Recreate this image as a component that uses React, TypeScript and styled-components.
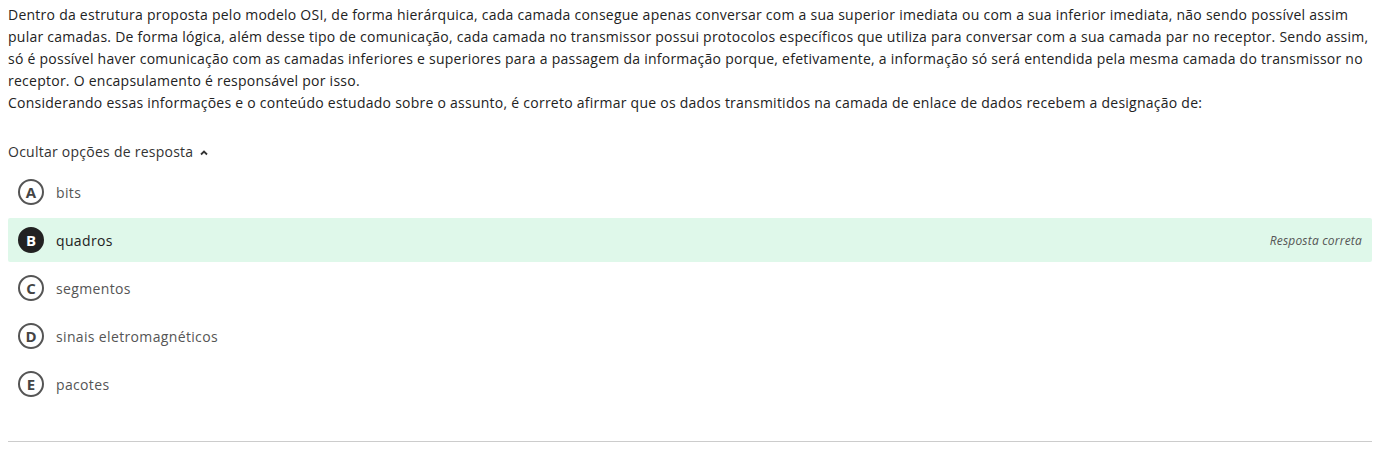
import React from "react";
import styled, { createGlobalStyle } from "styled-components";

const Global = createGlobalStyle`
  html, body { margin: 0; padding: 0; background: #fff; }
  body { font-family: "Open Sans", "Liberation Sans", sans-serif; color: #222; }
`;

const Page = styled.div`
  padding: 4px 13px 0 8px;
  display: flex;
  flex-direction: column;
`;

const Statement = styled.div`
  font-size: 14px;
  line-height: 22px;
  letter-spacing: 0.25px;
  color: #222;
`;

const Para = styled.p`
  margin: 0;
`;

const Toggle = styled.div`
  margin-top: 27px;
  display: flex;
  align-items: center;
  gap: 6px;
  font-size: 14px;
  line-height: 22px;
  letter-spacing: 0.25px;
  color: #333;
`;

const Options = styled.div`
  margin-top: 7px;
  display: flex;
  flex-direction: column;
  gap: 4px;
`;

const Row = styled.div<{ $correct?: boolean }>`
  height: 44px;
  display: flex;
  align-items: center;
  padding: 0 10px;
  gap: 12px;
  border-radius: 2px;
  background: ${(p) => (p.$correct ? "#dff8ea" : "transparent")};
`;

const Letter = styled.span<{ $filled?: boolean }>`
  width: 26px;
  height: 26px;
  box-sizing: border-box;
  border-radius: 50%;
  border: 2px solid ${(p) => (p.$filled ? "#222" : "#555")};
  background: ${(p) => (p.$filled ? "#222" : "transparent")};
  color: ${(p) => (p.$filled ? "#fff" : "#444")};
  display: flex;
  align-items: center;
  justify-content: center;
  font-size: 15px;
  font-weight: 700;
  flex: none;
`;

const Text = styled.span<{ $strong?: boolean }>`
  font-size: 14px;
  letter-spacing: 0.35px;
  color: ${(p) => (p.$strong ? "#222" : "#555")};
  flex: 1;
`;

const Note = styled.span`
  font-size: 12px;
  font-style: italic;
  letter-spacing: 0.2px;
  color: #555;
`;

const Divider = styled.hr`
  margin: 35px 0 0 0;
  border: none;
  border-top: 1px solid #ccc;
`;

const Chevron = () => (
  <svg width="10" height="10" viewBox="0 0 10 10" style={{ marginTop: 2 }}>
    <path d="M2 6.5 L5 3.5 L8 6.5" fill="none" stroke="#333" strokeWidth="1.8" />
  </svg>
);

const options = [
  { l: "A", t: "bits" },
  { l: "B", t: "quadros", correct: true },
  { l: "C", t: "segmentos" },
  { l: "D", t: "sinais eletromagnéticos" },
  { l: "E", t: "pacotes" },
];

export default function App() {
  return (
    <>
      <Global />
      <Page>
        <Statement>
          <Para>
            Dentro da estrutura proposta pelo modelo OSI, de forma hierárquica, cada camada consegue apenas conversar com a sua superior imediata ou com a sua inferior imediata, não sendo possível assim pular camadas. De forma lógica, além desse tipo de comunicação, cada camada no transmissor possui protocolos específicos que utiliza para conversar com a sua camada par no receptor. Sendo assim, só é possível haver comunicação com as camadas inferiores e superiores para a passagem da informação porque, efetivamente, a informação só será entendida pela mesma camada do transmissor no receptor. O encapsulamento é responsável por isso.
          </Para>
          <Para>
            Considerando essas informações e o conteúdo estudado sobre o assunto, é correto afirmar que os dados transmitidos na camada de enlace de dados recebem a designação de:
          </Para>
        </Statement>
        <Toggle>
          Ocultar opções de resposta <Chevron />
        </Toggle>
        <Options>
          {options.map((o) => (
            <Row key={o.l} $correct={o.correct}>
              <Letter $filled={o.correct}>{o.l}</Letter>
              <Text $strong={o.correct}>{o.t}</Text>
              {o.correct && <Note>Resposta correta</Note>}
            </Row>
          ))}
        </Options>
        <Divider />
      </Page>
    </>
  );
}
